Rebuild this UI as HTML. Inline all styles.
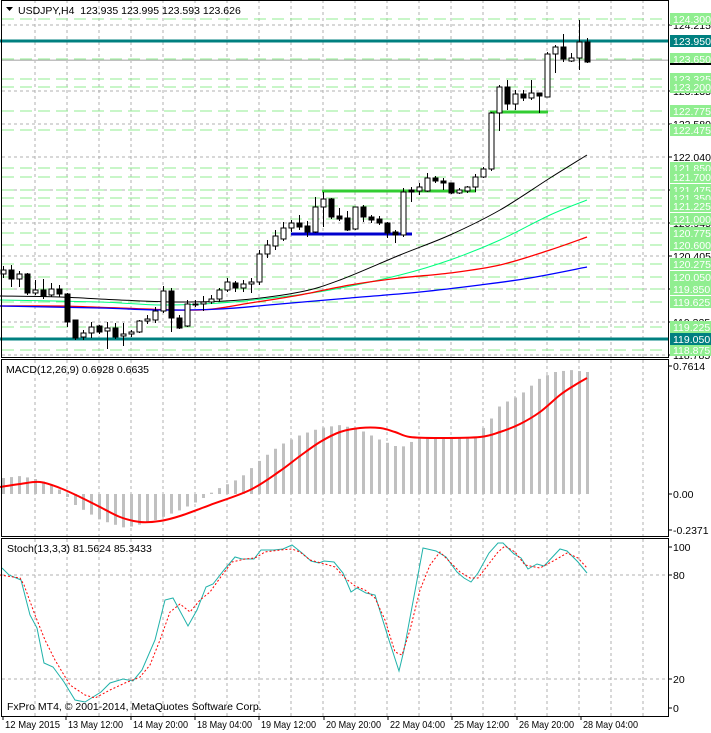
<!DOCTYPE html>
<html><head><meta charset="utf-8"><style>
html,body{margin:0;padding:0;background:#fff;width:711px;height:733px;overflow:hidden}
svg{display:block;font-family:"Liberation Sans",sans-serif;font-size:10.5px}
</style></head><body>
<svg id="s" width="711" height="733" xmlns="http://www.w3.org/2000/svg"></svg>
<script>
const S=document.getElementById('s');let h='';
const L=(x1,y1,x2,y2,c,w,d)=>h+=`<line x1="${x1}" y1="${y1}" x2="${x2}" y2="${y2}" stroke="${c}" stroke-width="${w||1}" ${d?`stroke-dasharray="${d}"`:''} shape-rendering="crispEdges"/>`;
const T=(x,y,t,c,a)=>h+=`<text x="${x}" y="${y}" fill="${c||'#000'}" ${a||''}>${t}</text>`;
const P=(pts,c,w,d)=>h+=`<polyline fill="none" points="${pts.map(p=>p.join(',')).join(' ')}" stroke="${c}" stroke-width="${w}" ${d?`stroke-dasharray="${d}"`:''}/>`;
const SM=(p,c,w)=>{let d=`M${p[0][0]},${p[0][1]}`;for(let i=0;i<p.length-1;i++){const p0=p[i-1]||p[i],p1=p[i],p2=p[i+1],p3=p[i+2]||p2;d+=` C${p1[0]+(p2[0]-p0[0])/6},${p1[1]+(p2[1]-p0[1])/6} ${p2[0]-(p3[0]-p1[0])/6},${p2[1]-(p3[1]-p1[1])/6} ${p2[0]},${p2[1]}`;}h+=`<path d="${d}" fill="none" stroke="${c}" stroke-width="${w}"/>`;};
for(let x=35;x<668;x+=32){L(x,0,x,357,'#b0b0b0',1,'3,3');L(x,360,x,536,'#b0b0b0',1,'3,3');L(x,539,x,716,'#b0b0b0',1,'3,3');}
[25,91,124,157,190,223,256,289,322,355].forEach(y=>L(2,y,668,y,'#b0b0b0',1,'3,3'));
[575,679].forEach(y=>L(2,y,668,y,'#b0b0b0',1,'3,3'));
const G=[[19,'124.300'],[59,'123.650'],[79,'123.325'],[87,'123.200'],[111,'122.775'],[130,'122.475'],[168,'121.850'],[177,'121.700'],[190,'121.475'],[198,'121.350'],[206,'121.225'],[219,'121.000'],[233,'120.775'],[245,'120.600'],[264,'120.275'],[277,'120.050'],[289,'119.850'],[302,'119.625'],[327,'119.225'],[350,'118.875']];
G.forEach(g=>L(2,g[0],668,g[0],'#90ee90',1.3,'12,6'));
L(2,60,668,60,'#c0c0c0',1.5);
SM([[0,296],[60,297],[120,300],[180,302],[240,300],[300,292],[340,280],[400,255],[450,235],[500,210],[550,178],[587,155]],'#000',1);
SM([[0,300],[100,302],[160,305],[220,303],[280,297],[330,290],[400,275],[450,260],[500,240],[550,215],[587,200]],'#00ff7f',1);
SM([[0,306],[60,306],[120,308],[200,310],[250,303],[300,295],[350,285],[400,278],[450,273],[500,265],[550,250],[587,237]],'#ff0000',1.3);
SM([[0,306],[100,308],[160,310],[220,309],[280,304],[350,298],[420,292],[480,285],[530,278],[587,267]],'#0000ff',1.3);
L(322,191,476,191,'#32cd32',3);L(490,112,548,112,'#32cd32',3);L(291,234,412,234,'#0000cd',3);
L(0,41,668,41,'#008080',3);L(0,339,668,339,'#008080',3);
const C=[[270,274,266,278,0],[270,279,265,287,1],[274,279,271,287,0],[274,293,273,295,1],[290,293,280,295,0],[290,296,279,299,1],[289,295,283,297,0],[289,294,285,297,1],[294,322,293,327,1],[320,338,320,340,1],[333,337,330,340,0],[327,333,322,338,0],[326,332,325,334,1],[328,331,322,349,0],[328,337,323,339,1],[334,336,323,346,0],[332,334,330,337,0],[321,332,320,333,0],[319,321,315,324,0],[311,320,307,323,0],[291,311,286,313,0],[291,318,288,332,1],[318,328,315,329,1],[304,326,300,327,0],[304,305,300,307,0],[302,304,296,311,0],[299,302,295,304,0],[290,299,288,302,0],[282,290,278,292,0],[283,288,281,292,1],[284,288,280,292,0],[282,284,278,293,0],[254,282,250,285,0],[245,254,240,258,0],[236,246,230,250,0],[228,239,222,241,0],[223,228,220,232,0],[223,227,215,230,1],[226,232,221,237,1],[207,232,197,233,0],[199,207,192,227,0],[199,217,198,219,1],[216,219,208,221,1],[218,230,211,231,1],[207,229,207,230,0],[207,217,205,222,1],[217,220,215,223,1],[219,223,216,225,1],[223,233,222,238,1],[232,235,230,243,1],[192,235,188,237,0],[190,192,187,202,1],[187,191,183,195,0],[178,191,173,192,0],[178,181,176,183,1],[181,183,178,190,1],[183,193,183,194,1],[190,193,188,194,0],[187,191,186,193,0],[177,187,174,192,0],[169,177,167,178,0],[113,169,112,171,0],[87,113,85,131,0],[87,104,80,110,1],[94,104,90,110,0],[94,98,90,101,1],[93,98,80,100,0],[93,96,93,113,1],[54,97,52,97,0],[47,54,45,73,0],[47,59,34,62,1],[58,61,53,62,0],[42,58,20,70,0],[42,62,38,63,1]];
C.forEach((c,i)=>{const x=3+8*i;L(x+.5,c[2],x+.5,c[3],'#000',1);h+=`<rect x="${x-2}" y="${c[0]}" width="5" height="${Math.max(1,c[1]-c[0])}" fill="${c[4]?'#000':'#fff'}" stroke="#000" stroke-width="1"/>`;});
const interp=(a,x)=>{for(let i=0;i<a.length-1;i++){if(x>=a[i][0]&&x<=a[i+1][0]){const t=(x-a[i][0])/(a[i+1][0]-a[i][0]);return a[i][1]+t*(a[i+1][1]-a[i][1]);}}return a[a.length-1][1];};
const H=[[3,478],[20,476],[40,480],[60,490],[75,505],[100,520],[125,528],[150,522],[180,510],[200,500],[215,490],[240,478],[260,460],[280,445],[300,435],[320,428],[340,425],[360,430],[380,440],[400,448],[420,437],[450,437],[475,437],[490,420],[500,405],[520,395],[540,378],[555,372],[570,370],[587,372]];
for(let i=0;i<74;i++){const x=3+8*i,y=interp(H,x);h+=`<rect x="${x-1}" y="${Math.min(y,494)}" width="3" height="${Math.max(1,Math.abs(494-y))}" fill="#c0c0c0"/>`;}
SM([[0,487],[20,484],[40,482],[60,488],[80,497],[100,507],[120,517],[140,522],[160,521],[180,516],[210,505],[250,490],[280,471],[300,456],[320,442],[340,432],[360,428],[380,428],[395,432],[410,437],[440,438],[480,437],[500,432],[520,424],[540,412],[560,395],[575,385],[587,378]],'#ff0000',2);
P([[2,568],[9,575],[21,580],[30,615],[37,628],[44,663],[53,667],[64,682],[75,700],[85,702],[101,692],[110,683],[123,679],[133,681],[142,670],[155,640],[165,600],[173,598],[188,626],[197,610],[206,587],[213,584],[224,570],[235,557],[242,559],[254,559],[261,550],[274,550],[283,549],[292,545],[302,553],[311,561],[319,563],[324,561],[334,562],[343,573],[351,592],[357,588],[366,593],[375,595],[388,637],[399,671],[404,650],[423,548],[436,551],[446,557],[457,572],[464,578],[471,582],[478,573],[489,553],[498,543],[503,543],[514,554],[521,558],[528,569],[537,564],[544,566],[560,549],[567,551],[578,562],[587,573]],'#20b2aa',1);
P([[0,575],[20,578],[24,585],[35,615],[45,640],[55,660],[70,685],[85,695],[95,698],[110,690],[125,683],[140,677],[150,665],[160,640],[170,612],[180,604],[190,612],[200,600],[210,592],[220,578],[232,562],[245,559],[255,558],[265,552],[280,550],[292,549],[300,552],[310,560],[325,564],[335,567],[345,578],[355,586],[365,590],[375,598],[385,620],[395,652],[402,655],[410,630],[420,590],[430,565],[440,552],[450,562],[460,572],[470,578],[478,578],[488,565],[498,552],[505,546],[515,552],[525,565],[540,568],[555,560],[567,553],[578,558],[587,568]],'#ff0000',1,'2,2');
h+=`<rect x="1.5" y="0.5" width="667" height="357" fill="none" stroke="#000"/>`;
h+=`<rect x="1.5" y="359.5" width="667" height="177" fill="none" stroke="#000"/>`;
h+=`<rect x="1.5" y="538.5" width="667" height="178" fill="none" stroke="#000"/>`;
[[25,'124.215'],[91,'123.135'],[124,'122.580'],[157,'122.040'],[190,'121.500'],[223,'120.945'],[256,'120.405'],[289,'119.865'],[322,'119.325'],[355,'118.785']].forEach(t=>{L(668,t[0],672,t[0],'#000');T(673,t[0]+4,t[1]);});
G.forEach(g=>{h+=`<rect x="670" y="${g[0]-6}" width="41" height="12" fill="#90ee90"/>`;T(673,g[0]+4,g[1],'#fff');});
h+=`<rect x="670" y="35" width="41" height="12" fill="#008080"/>`;T(673,45,'123.950','#fff');
h+=`<rect x="670" y="333" width="41" height="12" fill="#008080"/>`;T(673,343,'119.050','#fff');
L(670,64,711,64,'#000',2);
[[366,'0.7614'],[494,'0.00'],[530,'-0.2371'],[547,'100'],[575,'80'],[679,'20'],[708,'0']].forEach(t=>{L(668,t[0],672,t[0],'#000');T(673,t[0]+4,t[1]);});
h+=`<path d="M6 7 L13 7 L9.5 11 Z" fill="#000"/>`;
T(18,14,'USDJPY,H4&#160;&#160;123.935 123.995 123.593 123.626');
T(6,373,'MACD(12,26,9) 0.6928 0.6635');
T(7,552,'Stoch(13,3,3) 81.5624 85.3433');
T(7,710,'FxPro MT4, © 2001-2014, MetaQuotes Software Corp.');
[[3,'12 May 2015'],[66,'13 May 12:00'],[131,'14 May 20:00'],[195,'18 May 04:00'],[259,'19 May 12:00'],[324,'20 May 20:00'],[388,'22 May 04:00'],[452,'25 May 12:00'],[517,'26 May 20:00'],[581,'28 May 04:00']].forEach(t=>{L(t[0],716,t[0],720,'#000');T(t[0]+2,728,t[1],'#000',`textLength="55" lengthAdjust="spacingAndGlyphs"`);});
S.innerHTML=h;
</script>
</body></html>
